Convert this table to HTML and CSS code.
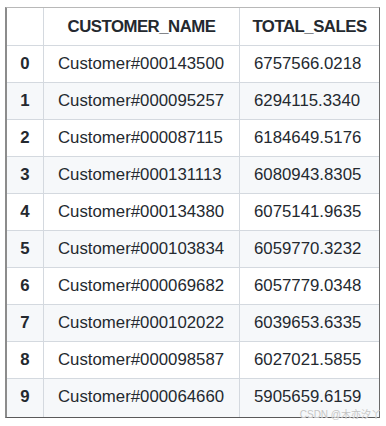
FILE: index.html
```html
<!DOCTYPE html>
<html lang="en">
<head>
<meta charset="utf-8">
<title>Top customers</title>
<link rel="stylesheet" href="styles.css">
</head>
<body>
<div class="page">
  <div class="frame">
    <table class="df">
      <thead>
        <tr><th class="idx"></th><th class="name">CUSTOMER_NAME</th><th class="sales">TOTAL_SALES</th></tr>
      </thead>
      <tbody>
        <tr><th class="idx">0</th><td>Customer#000143500</td><td>6757566.0218</td></tr>
        <tr><th class="idx">1</th><td>Customer#000095257</td><td>6294115.3340</td></tr>
        <tr><th class="idx">2</th><td>Customer#000087115</td><td>6184649.5176</td></tr>
        <tr><th class="idx">3</th><td>Customer#000131113</td><td>6080943.8305</td></tr>
        <tr><th class="idx">4</th><td>Customer#000134380</td><td>6075141.9635</td></tr>
        <tr><th class="idx">5</th><td>Customer#000103834</td><td>6059770.3232</td></tr>
        <tr><th class="idx">6</th><td>Customer#000069682</td><td>6057779.0348</td></tr>
        <tr><th class="idx">7</th><td>Customer#000102022</td><td>6039653.6335</td></tr>
        <tr><th class="idx">8</th><td>Customer#000098587</td><td>6027021.5855</td></tr>
        <tr><th class="idx">9</th><td>Customer#000064660</td><td>5905659.6159</td></tr>
      </tbody>
    </table>
  </div>
  <div class="watermark">CSDN @木亦汐丫</div>
</div>
</body>
</html>
```
FILE: styles.css
```css
html, body {
  margin: 0;
  padding: 0;
  background: #ffffff;
}
body {
  font-family: "Liberation Sans", Arial, "Noto Sans CJK SC", sans-serif;
  color: #24292f;
}
.page {
  position: relative;
  width: 386px;
  height: 426px;
  padding: 7px 0 0 5px;
  box-sizing: border-box;
}
.frame {
  display: inline-block;
  border-top: 1px solid #b8b8b8;
  border-left: 2px solid #8c8c8c;
  border-right: 1px solid #6a6a6a;
  border-bottom: 1px solid #5a5a5a;
}
.df {
  border-collapse: separate;
  border-spacing: 0;
  font-size: 16.8px;
  line-height: 20px;
}
.df th, .df td {
  padding: 8px 0 8px 14px;
  border-right: 1px solid #d4d9df;
  border-bottom: 1px solid #d4d9df;
  text-align: left;
  white-space: nowrap;
  box-sizing: border-box;
}
.df tr > :last-child {
  border-right: none;
}
.df tbody tr:last-child > * {
  border-bottom: none;
  padding-bottom: 10px;
}
.df thead th {
  padding: 9px 0 8px 0;
  text-align: center;
  font-weight: bold;
  letter-spacing: -0.5px;
}
.df th.idx {
  width: 37px;
  padding-left: 0;
  text-align: center;
  font-weight: bold;
}
.df .name {
  width: 196px;
}
.df .sales {
  width: 139px;
}
.df tbody tr:nth-child(even) {
  background: #f6f8fa;
}
.watermark {
  position: absolute;
  right: 5px;
  bottom: 5px;
  font-size: 10px;
  line-height: 12px;
  color: #c4c4c4;
  font-family: "Liberation Sans", "Noto Sans CJK SC", sans-serif;
  text-shadow: 0 0 1px #ffffff;
}
```
